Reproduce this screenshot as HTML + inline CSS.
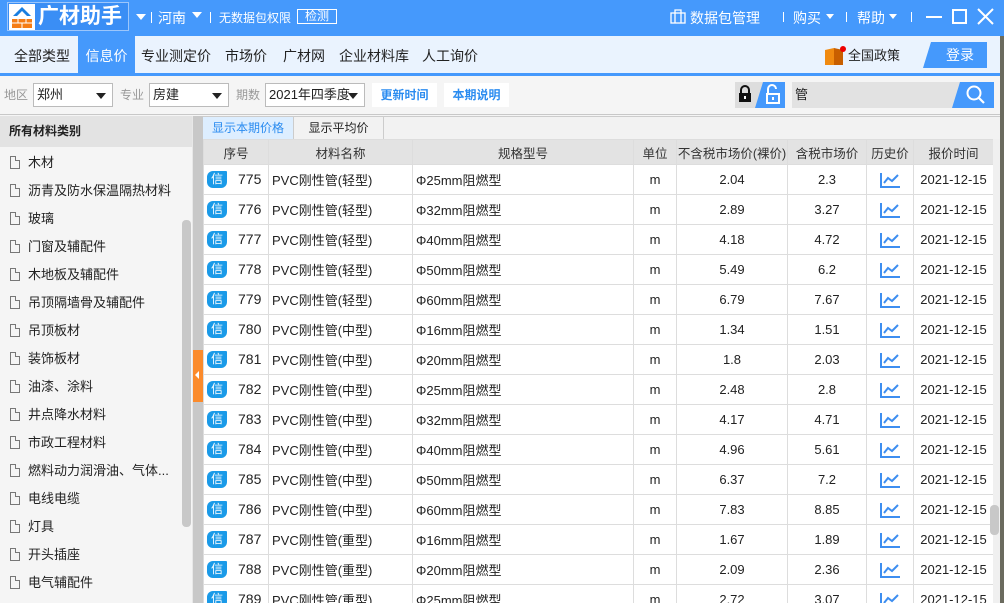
<!DOCTYPE html><html><head><meta charset="utf-8"><style>
*{margin:0;padding:0;box-sizing:border-box}
html,body{width:1004px;height:603px;overflow:hidden}
body{font-family:"Liberation Sans","Noto Sans CJK SC",sans-serif;font-size:13px;color:#222;background:#f5f5f5;position:relative}
.abs{position:absolute}
#top{left:0;top:0;width:1004px;height:36px;background:#4599fc;color:#fff}
#nav{left:0;top:36px;width:1004px;height:37px;background:#eaf3fe}
#nav span{position:absolute;top:0;height:37px;line-height:40px;font-size:14px;color:#222}
#bl{left:0;top:73px;width:1004px;height:3px;background:#4599fc}
#tb{left:0;top:76px;width:1004px;height:39px;background:#f5f5f5;border-bottom:1px solid #c8c8c8}
.sel{position:absolute;top:7px;height:24px;border:1px solid #bbb;background:#fff;font-size:13px;line-height:22px;padding-left:3px}
.sel:after{content:"";position:absolute;right:6px;top:9px;border:5px solid transparent;border-top:6px solid #222}
.lbl{position:absolute;top:7px;line-height:24px;color:#999;font-size:12px}
.btn{position:absolute;top:7px;height:24px;background:#fff;color:#2b8cf0;font-size:12px;line-height:24px;text-align:center;font-weight:bold}
#left{left:0;top:116px;width:192px;height:487px;background:#f5f5f5}
#lh{position:absolute;left:0;top:0;width:192px;height:31px;background:#e3e3e3;font-weight:bold;font-size:12px;line-height:31px;padding-left:9px}
.it{position:absolute;left:10px;font-size:13px;height:28px;line-height:28px}
.it i{display:inline-block;width:10px;height:13px;border:1px solid #777;margin-right:8px;vertical-align:-2px;position:relative}
.it i:after{content:"";position:absolute;right:-1px;top:-1px;width:4px;height:4px;background:#f5f5f5;border-left:1px solid #777;border-bottom:1px solid #777}
#div{left:192px;top:116px;width:11px;height:487px;background:#c8c8c8;border-left:1px solid #e8e8e8}
table{border-collapse:collapse;position:absolute;left:203px;top:139px;table-layout:fixed;width:790px;background:#fff}
td,th{border:1px solid #ddd;height:30px;font-size:13px;text-align:center;white-space:nowrap;overflow:hidden;vertical-align:middle;padding:0}
th{height:25px;background:#e3e3e3;font-weight:normal;color:#333;font-size:12.5px}
td.l{text-align:left;padding-left:3px}
td.n{font-size:14px;text-align:left;padding-left:3px}
.xin{display:inline-block;width:20px;height:17px;background:#1a9ae8;color:#fff;font-size:12px;line-height:17px;border-radius:6px 1px 6px 6px;vertical-align:middle;margin-right:11px;text-align:center}
</style></head><body>
<div id="top" class="abs">
 <div class="abs" style="left:7px;top:2px;width:122px;height:29px;border:1px solid #9cc6fb;background:#3a8ef5"></div>
 <svg class="abs" style="left:9px;top:4px" width="26" height="26"><rect x="0" y="0" width="26" height="26" fill="#fff"/><path d="M4 12 L13 3 L22 12 L18 12 L13 7 L8 12Z" fill="#1a7fe0"/><rect x="3" y="15" width="20" height="9" fill="#f57c14"/><path d="M3 19H23M9 15V19M17 15V19M13 19V24" stroke="#fff" stroke-width="1"/></svg>
 <div class="abs" style="left:38px;top:4px;font-size:21px;font-weight:bold;line-height:26px">广材助手</div>
 <div class="abs" style="left:136px;top:14px;border:5px solid transparent;border-top:6px solid #fff"></div>
 <div class="abs" style="left:151px;top:12px;width:1px;height:11px;background:#fff"></div>
 <div class="abs" style="left:158px;top:8px;font-size:14px">河南</div>
 <div class="abs" style="left:192px;top:12px;border:5px solid transparent;border-top:6px solid #fff"></div>
 <div class="abs" style="left:210px;top:12px;width:1px;height:11px;background:#fff"></div>
 <div class="abs" style="left:219px;top:9px;font-size:12px">无数据包权限</div>
 <div class="abs" style="left:297px;top:9px;width:40px;height:15px;border:1px solid #fff;font-size:12px;line-height:13px;text-align:center">检测</div>
 <svg class="abs" style="left:670px;top:9px" width="16" height="15"><rect x="1" y="4" width="14" height="10" fill="none" stroke="#fff" stroke-width="1.3"/><path d="M5 4V1H11V4M5 4V14M11 4V14" stroke="#fff" fill="none" stroke-width="1.3"/></svg>
 <div class="abs" style="left:690px;top:8px;font-size:14px">数据包管理</div>
 <div class="abs" style="left:783px;top:12px;width:1px;height:10px;background:#fff"></div>
 <div class="abs" style="left:793px;top:8px;font-size:14px">购买</div>
 <div class="abs" style="left:826px;top:14px;border:4px solid transparent;border-top:5px solid #fff"></div>
 <div class="abs" style="left:846px;top:12px;width:1px;height:10px;background:#fff"></div>
 <div class="abs" style="left:857px;top:8px;font-size:14px">帮助</div>
 <div class="abs" style="left:889px;top:14px;border:4px solid transparent;border-top:5px solid #fff"></div>
 <div class="abs" style="left:911px;top:12px;width:1px;height:10px;background:#fff"></div>
 <div class="abs" style="left:926px;top:16px;width:16px;height:2px;background:#fff"></div>
 <div class="abs" style="left:952px;top:9px;width:15px;height:15px;border:2px solid #fff"></div>
 <svg class="abs" style="left:977px;top:8px" width="17" height="17"><path d="M1 1L16 16M16 1L1 16" stroke="#fff" stroke-width="2"/></svg>
</div>
<div id="nav" class="abs">
 <span style="left:14px">全部类型</span>
 <span style="left:78px;width:57px;background:#4599fc;color:#fff;text-align:center">信息价</span>
 <span style="left:141px">专业测定价</span>
 <span style="left:225px">市场价</span>
 <span style="left:283px">广材网</span>
 <span style="left:339px">企业材料库</span>
 <span style="left:422px">人工询价</span>
 <svg class="abs" style="left:824px;top:10px" width="22" height="20"><path d="M1 4L10 2V19L1 19Z" fill="#f08a10"/><path d="M10 2L19 4V19L10 19Z" fill="#c85f00"/><circle cx="19" cy="3" r="3" fill="#e00"/></svg>
 <span style="left:848px;font-size:13px">全国政策</span>
 <div class="abs" style="left:923px;top:6px;width:64px;height:26px;background:#4599fc;clip-path:polygon(8px 0,100% 0,100% 100%,0 100%);color:#fff;font-size:14px;line-height:26px;text-align:center;padding-left:10px">登录</div>
</div>
<div id="bl" class="abs"></div>
<div id="tb" class="abs">
 <span class="lbl" style="left:4px">地区</span>
 <div class="sel" style="left:33px;width:80px">郑州</div>
 <span class="lbl" style="left:120px">专业</span>
 <div class="sel" style="left:149px;width:80px">房建</div>
 <span class="lbl" style="left:236px">期数</span>
 <div class="sel" style="left:265px;width:100px">2021年四季度</div>
 <div class="btn" style="left:372px;width:65px">更新时间</div>
 <div class="btn" style="left:444px;width:65px">本期说明</div>
 <div class="abs" style="left:735px;top:6px;width:50px;height:26px;background:#ddd"></div>
 <svg class="abs" style="left:738px;top:9px" width="14" height="18"><path d="M3 8V5A4 4 0 0 1 11 5V8" stroke="#111" stroke-width="2" fill="none"/><rect x="1" y="8" width="12" height="9" fill="#111"/><rect x="6" y="11" width="2" height="3" fill="#fff"/></svg>
 <div class="abs" style="left:755px;top:6px;width:30px;height:26px;background:#4599fc;clip-path:polygon(8px 0,100% 0,100% 100%,0 100%)"></div>
 <svg class="abs" style="left:765px;top:8px" width="16" height="20"><path d="M3 9V5A4 4 0 0 1 11 5" stroke="#fff" stroke-width="2" fill="none"/><rect x="2" y="10" width="12" height="9" fill="none" stroke="#fff" stroke-width="2"/><rect x="7" y="13" width="2" height="3" fill="#fff"/></svg>
 <div class="abs" style="left:792px;top:6px;width:202px;height:26px;background:#e2e2e2;font-size:13px;line-height:26px;padding-left:3px">管</div>
 <div class="abs" style="left:952px;top:6px;width:42px;height:26px;background:#4599fc;clip-path:polygon(8px 0,100% 0,100% 100%,0 100%)"></div>
 <svg class="abs" style="left:966px;top:9px" width="20" height="20"><circle cx="8" cy="8" r="6.5" stroke="#fff" stroke-width="2" fill="none"/><path d="M13 13L18 18" stroke="#fff" stroke-width="2.2"/></svg>
</div>
<div id="left" class="abs">
 <div id="lh">所有材料类别</div>
 <div class="it" style="top:33px"><i></i>木材</div>
 <div class="it" style="top:61px"><i></i>沥青及防水保温隔热材料</div>
 <div class="it" style="top:89px"><i></i>玻璃</div>
 <div class="it" style="top:117px"><i></i>门窗及辅配件</div>
 <div class="it" style="top:145px"><i></i>木地板及辅配件</div>
 <div class="it" style="top:173px"><i></i>吊顶隔墙骨及辅配件</div>
 <div class="it" style="top:201px"><i></i>吊顶板材</div>
 <div class="it" style="top:229px"><i></i>装饰板材</div>
 <div class="it" style="top:257px"><i></i>油漆、涂料</div>
 <div class="it" style="top:285px"><i></i>井点降水材料</div>
 <div class="it" style="top:313px"><i></i>市政工程材料</div>
 <div class="it" style="top:341px"><i></i>燃料动力润滑油、气体...</div>
 <div class="it" style="top:369px"><i></i>电线电缆</div>
 <div class="it" style="top:397px"><i></i>灯具</div>
 <div class="it" style="top:425px"><i></i>开头插座</div>
 <div class="it" style="top:453px"><i></i>电气辅配件</div>
 <div class="abs" style="left:182px;top:104px;width:9px;height:307px;background:#c8c8c8;border-radius:4px"></div>
</div>
<div id="div" class="abs"><div class="abs" style="left:0;top:234px;width:10px;height:52px;background:#fb8b2c"></div><div class="abs" style="left:2px;top:255px;border:4px solid transparent;border-right:4px solid #fff;border-left:0"></div></div>
<div class="abs" style="left:203px;top:116px;width:801px;height:23px;background:#f2f2f2;border-top:1px solid #ccc"></div>
<div class="abs" style="left:203px;top:117px;width:91px;height:22px;background:#ddeeff;color:#2b8cf0;font-size:12px;line-height:22px;text-align:center;border-right:1px solid #ccc">显示本期价格</div>
<div class="abs" style="left:294px;top:117px;width:90px;height:22px;font-size:12px;line-height:22px;text-align:center;border-right:1px solid #ccc">显示平均价</div>
<table>
<colgroup><col style="width:65px"><col style="width:144px"><col style="width:221px"><col style="width:43px"><col style="width:111px"><col style="width:79px"><col style="width:47px"><col style="width:80px"></colgroup>
<tr><th>序号</th><th>材料名称</th><th>规格型号</th><th>单位</th><th>不含税市场价(裸价)</th><th>含税市场价</th><th>历史价</th><th>报价时间</th></tr>
<tbody id="tb2"></tbody>
</table>
<div class="abs" style="left:993px;top:139px;width:7px;height:464px;background:#f0f0f0"></div>
<div class="abs" style="left:990px;top:505px;width:9px;height:30px;background:#c8c8c8;border-radius:4px"></div>
<div class="abs" style="left:1000px;top:36px;width:4px;height:567px;background:#6b6b5e"></div>
<script>
var d=[[775,"轻",25,"2.04","2.3"],[776,"轻",32,"2.89","3.27"],[777,"轻",40,"4.18","4.72"],[778,"轻",50,"5.49","6.2"],[779,"轻",60,"6.79","7.67"],[780,"中",16,"1.34","1.51"],[781,"中",20,"1.8","2.03"],[782,"中",25,"2.48","2.8"],[783,"中",32,"4.17","4.71"],[784,"中",40,"4.96","5.61"],[785,"中",50,"6.37","7.2"],[786,"中",60,"7.83","8.85"],[787,"重",16,"1.67","1.89"],[788,"重",20,"2.09","2.36"],[789,"重",25,"2.72","3.07"]];
var ic='<svg width="21" height="16" style="vertical-align:middle"><path d="M1 1V15H20" stroke="#3d8ef0" stroke-width="2" fill="none"/><path d="M4 11L8 6L12 9L18 3" stroke="#3d8ef0" stroke-width="2" fill="none"/></svg>';
var h="";d.forEach(function(r){h+='<tr><td class="n"><span class="xin">信</span>'+r[0]+'</td><td class="l">PVC刚性管('+r[1]+'型)</td><td class="l">Φ'+r[2]+'mm阻燃型</td><td>m</td><td>'+r[3]+'</td><td>'+r[4]+'</td><td>'+ic+'</td><td>2021-12-15</td></tr>'});
document.getElementById("tb2").innerHTML=h;
</script>
</body></html>
